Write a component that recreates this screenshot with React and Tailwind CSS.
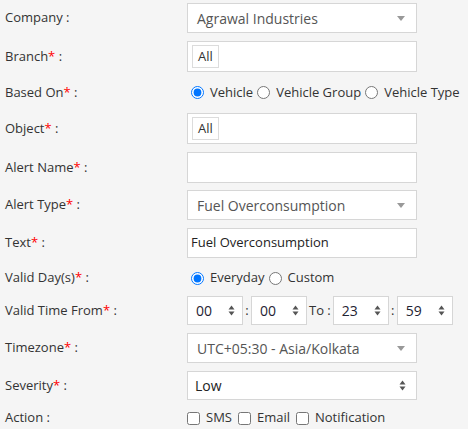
import React from "react";

const font = { fontFamily: '"Open Sans", "Noto Sans", sans-serif' };

function Req() {
  return <span className="text-[#ff0000]">*</span>;
}

function Label({ children }) {
  return (
    <div className="w-[182px] shrink-0 text-[13px] text-[#333]">{children}</div>
  );
}

function Caret() {
  return (
    <svg width="8" height="5" viewBox="0 0 8 5" className="mr-[7px]">
      <path d="M0 0 L8 0 L4 5 Z" fill="#999" />
    </svg>
  );
}

function UpDown() {
  return (
    <svg width="7" height="11" viewBox="0 0 7 11">
      <path d="M0.5 4.5 L3.5 0.5 L6.5 4.5 Z" fill="#555" />
      <path d="M0.5 6.5 L3.5 10.5 L6.5 6.5 Z" fill="#555" />
    </svg>
  );
}

function Select2({ text, h = "h-[30px]" }) {
  return (
    <div
      className={`w-[230px] ${h} bg-white border border-[#d6d6d6] flex items-center justify-between pl-[9px] pr-[4px] text-[14px] text-[#555]`}
    >
      <span>{text}</span>
      <Caret />
    </div>
  );
}

function Chip() {
  return (
    <div className="w-[230px] h-[31px] bg-white border border-[#d6d6d6] flex items-center pl-[4px]">
      <div className="h-[23px] w-[27px] pl-[5px] border border-[#dcdcdc] bg-white flex items-center text-[13px] text-[#333]">
        All
      </div>
    </div>
  );
}

function Radio({ checked, label, gap = "mr-[4px]" }) {
  return (
    <label className={`flex items-center ${gap}`}>
      <input
        type="radio"
        defaultChecked={checked}
        name={label}
        className="m-0 w-[13px] h-[13px] mr-[6px]"
      />
      <span className="text-[13px] text-[#333]">{label}</span>
    </label>
  );
}

function Check({ label }) {
  return (
    <label className="flex items-center mr-[6px]">
      <input type="checkbox" className="m-0 w-[13px] h-[13px] mr-[6px]" />
      <span className="text-[13px] text-[#333]">{label}</span>
    </label>
  );
}

function TimeBox({ v }) {
  return (
    <div className="w-[56px] h-[29px] bg-white border border-[#d6d6d6] flex items-center justify-between pl-[8px] pr-[7px] text-[14px] text-[#1f2333]">
      <span>{v}</span>
      <UpDown />
    </div>
  );
}

export default function App() {
  return (
    <div
      className="w-[468px] h-[429px] bg-[#f5f5f5] pl-[5px] pt-[3px] overflow-hidden"
      style={font}
    >
      <div className="flex items-center">
        <Label>Company :</Label>
        <Select2 text="Agrawal Industries" h="h-[30px]" />
      </div>
      <div className="flex items-center mt-[8px]">
        <Label>
          Branch<Req /> :
        </Label>
        <Chip />
      </div>
      <div className="flex items-center mt-[8px] h-[25px]">
        <Label>
          Based On<Req /> :
        </Label>
        <div className="flex items-center pl-[4px]">
          <Radio checked label="Vehicle" />
          <Radio label="Vehicle Group" />
          <Radio label="Vehicle Type" />
        </div>
      </div>
      <div className="flex items-center mt-[8px]">
        <Label>
          Object<Req /> :
        </Label>
        <Chip />
      </div>
      <div className="flex items-center mt-[8px]">
        <Label>
          Alert Name<Req /> :
        </Label>
        <div className="w-[230px] h-[31px] bg-white border border-[#d6d6d6]" />
      </div>
      <div className="flex items-center mt-[7px]">
        <Label>
          Alert Type<Req /> :
        </Label>
        <Select2 text="Fuel Overconsumption" />
      </div>
      <div className="flex items-center mt-[8px]">
        <Label>
          Text<Req /> :
        </Label>
        <div className="w-[230px] h-[30px] bg-white border border-[#d6d6d6] flex items-center pl-[3px] text-[13px] text-[#222]">
          Fuel Overconsumption
        </div>
      </div>
      <div className="flex items-center mt-[8px] h-[24px]">
        <Label>
          Valid Day(s)<Req /> :
        </Label>
        <div className="flex items-center pl-[4px]">
          <Radio checked label="Everyday" />
          <Radio label="Custom" />
        </div>
      </div>
      <div className="flex items-center mt-[6px]">
        <Label>
          Valid Time From<Req /> :
        </Label>
        <div className="flex items-center text-[13px] text-[#333]">
          <TimeBox v="00" />
          <span className="w-[8px] text-center">:</span>
          <TimeBox v="00" />
          <span className="px-[2px]">To :</span>
          <TimeBox v="23" />
          <span className="w-[8px] text-center">:</span>
          <TimeBox v="59" />
        </div>
      </div>
      <div className="flex items-center mt-[8px]">
        <Label>
          Timezone<Req /> :
        </Label>
        <Select2 text="UTC+05:30 - Asia/Kolkata" />
      </div>
      <div className="flex items-center mt-[8px]">
        <Label>
          Severity<Req /> :
        </Label>
        <div className="w-[230px] h-[29px] bg-white border border-[#d6d6d6] flex items-center justify-between pl-[7px] pr-[10px] text-[14px] text-[#222]">
          <span>Low</span>
          <UpDown />
        </div>
      </div>
      <div className="flex items-center mt-[8px] h-[20px]">
        <Label>Action :</Label>
        <div className="flex items-center">
          <Check label="SMS" />
          <Check label="Email" />
          <Check label="Notification" />
        </div>
      </div>
    </div>
  );
}
